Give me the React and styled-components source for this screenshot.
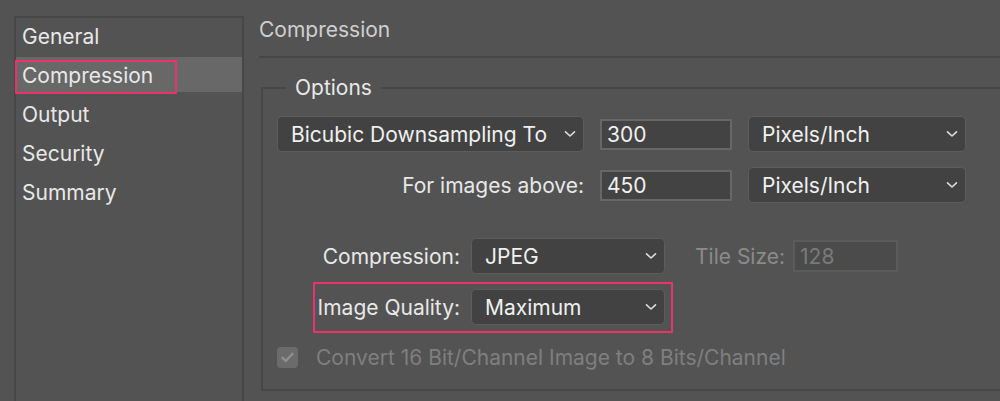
import React from 'react';
import styled, { createGlobalStyle } from 'styled-components';

const GlobalStyle = createGlobalStyle`
  html, body {
    margin: 0;
    background: #535353;
  }
  body {
    font-family: Inter, "Noto Sans", sans-serif;
  }
`;

const Window = styled.div`
  display: flex;
  height: 401px;
  overflow: hidden;
  background: #535353;
  color: #e8e8e8;
  font-size: 21px;
`;

const Sidebar = styled.ul`
  list-style: none;
  margin: 16px 0 0 14px;
  padding: 0;
  width: 226px;
  height: 420px;
  flex-shrink: 0;
  border: 2px solid #474747;
  border-bottom: none;
  display: flex;
  flex-direction: column;
  gap: 4px;
`;

const NavItem = styled.li`
  position: relative;
  height: 35px;
  display: flex;
  align-items: center;
  padding: 1px 0 0 6px;
  box-sizing: border-box;
  background: ${(props) => (props.active ? '#686868' : 'transparent')};
`;

const Annotation = styled.div`
  position: absolute;
  box-sizing: border-box;
  border: 2px solid #e8336d;
  border-radius: 1px;
  pointer-events: none;
  left: ${(p) => p.left}px;
  top: ${(p) => p.top}px;
  width: ${(p) => p.width}px;
  height: ${(p) => p.height}px;
`;

const Main = styled.div`
  flex: 1;
  margin-left: 15px;
  display: flex;
  flex-direction: column;
`;

const Header = styled.div`
  height: 53px;
  padding-top: 3px;
  display: flex;
  align-items: center;
  color: #cfcfcf;
  border-bottom: 2px solid #474747;
  width: 800px;
`;

const Group = styled.fieldset`
  margin: 18px 0 0 2px;
  padding: 0 0 22px 14px;
  width: 760px;
  border: 2px solid #474747;
  border-right: none;
`;

const Legend = styled.legend`
  margin-left: 9px;
  padding: 0 9px;
  line-height: 24px;
  color: #e8e8e8;
`;

const Content = styled.div`
  padding-top: 16px;
  display: flex;
  flex-direction: column;
`;

const FormRow = styled.div`
  position: relative;
  display: grid;
  grid-template-columns: ${(p) => p.columns};
  column-gap: ${(p) => p.gap}px;
  align-items: center;
  height: 36px;
  margin-top: ${(p) => p.top || 0}px;
`;

const Label = styled.span`
  text-align: right;
  white-space: nowrap;
  color: ${(p) => (p.disabled ? '#8b8b8b' : '#e8e8e8')};
`;

const SelectBox = styled.div`
  box-sizing: border-box;
  height: 36px;
  display: flex;
  align-items: center;
  justify-content: space-between;
  padding: 0 7px 0 13px;
  background: #424242;
  border: 1.5px solid #5c5c5c;
  border-radius: 5px;
  color: #f0f0f0;
  white-space: nowrap;
`;

const Field = styled.input`
  box-sizing: border-box;
  width: ${(p) => p.w}px;
  height: ${(p) => (p.disabled ? 32 : 31)}px;
  margin: 0;
  padding: 0 5px;
  font: inherit;
  font-size: 21px;
  outline: none;
  border-radius: 0;
  border: 2px solid ${(p) => (p.disabled ? '#5b5b5b' : '#676767')};
  background: ${(p) => (p.disabled ? '#4b4b4b' : '#434343')};
  color: ${(p) => (p.disabled ? '#7a7a7a' : '#f0f0f0')};
  &:disabled {
    color: #7a7a7a;
    -webkit-text-fill-color: #7a7a7a;
  }
`;

const TileGroup = styled.div`
  display: flex;
  align-items: center;
  gap: 8px;
  margin-left: 19px;
`;

const CheckRow = styled.label`
  display: flex;
  align-items: center;
  gap: 18px;
  margin-top: 22px;
  color: #7f7f7f;
  height: 20px;
`;

const CheckBox = styled.span`
  width: 21px;
  height: 21px;
  border-radius: 4px;
  background: #6b6b6b;
  display: flex;
  align-items: center;
  justify-content: center;
`;

const Chevron = () => (
  <svg width="12" height="8" viewBox="0 0 12 8">
    <path d="M1.5 1.8 L6 6 L10.5 1.8" fill="none" stroke="#dcdcdc" strokeWidth="1.6" strokeLinecap="round" strokeLinejoin="round" />
  </svg>
);

const Select = ({ children }) => (
  <SelectBox>
    <span>{children}</span>
    <Chevron />
  </SelectBox>
);

const navItems = ['General', 'Compression', 'Output', 'Security', 'Summary'];

export default function App() {
  return (
    <>
      <GlobalStyle />
      <Window>
        <Sidebar>
          {navItems.map((item) => (
            <NavItem key={item} active={item === 'Compression'}>
              {item}
              {item === 'Compression' && <Annotation left={-1} top={3} width={162} height={34} />}
            </NavItem>
          ))}
        </Sidebar>
        <Main>
          <Header>Compression</Header>
          <Group>
            <Legend>Options</Legend>
            <Content>
              <FormRow columns="307px 132px 218px" gap={16}>
                <Select>Bicubic Downsampling To</Select>
                <Field w={132} defaultValue="300" />
                <Select>Pixels/Inch</Select>
              </FormRow>
              <FormRow columns="307px 132px 218px" gap={16} top={15}>
                <Label>For images above:</Label>
                <Field w={132} defaultValue="450" />
                <Select>Pixels/Inch</Select>
              </FormRow>
              <FormRow columns="183px 194px auto" gap={11} top={35}>
                <Label>Compression:</Label>
                <Select>JPEG</Select>
                <TileGroup>
                  <Label disabled>Tile Size:</Label>
                  <Field w={105} disabled defaultValue="128" />
                </TileGroup>
              </FormRow>
              <FormRow columns="183px 194px auto" gap={11} top={15}>
                <Label>Image Quality:</Label>
                <Select>Maximum</Select>
                <Annotation left={36} top={-7} width={360} height={51} />
              </FormRow>
              <CheckRow>
                <CheckBox>
                  <svg width="13" height="11" viewBox="0 0 13 11">
                    <path d="M1.5 5.8 L4.8 9 L11.5 1.8" fill="none" stroke="#8f8f8f" strokeWidth="2.4" strokeLinecap="round" strokeLinejoin="round" />
                  </svg>
                </CheckBox>
                Convert 16 Bit/Channel Image to 8 Bits/Channel
              </CheckRow>
            </Content>
          </Group>
        </Main>
      </Window>
    </>
  );
}
